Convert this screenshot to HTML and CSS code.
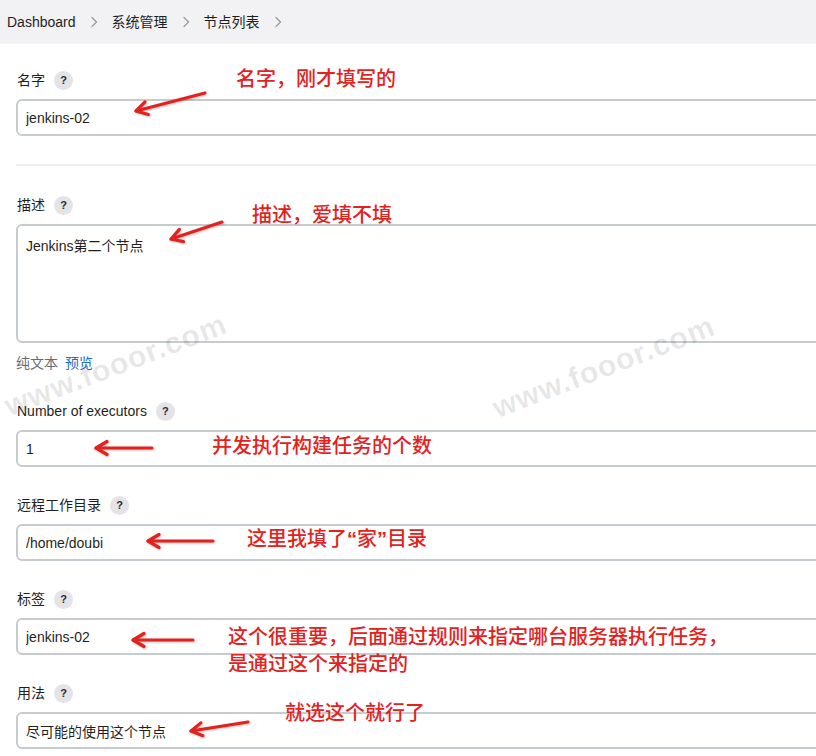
FILE: index.html
```html
<!DOCTYPE html>
<html lang="zh-CN">
<head>
  <meta charset="UTF-8">
  <title>节点列表 - Jenkins</title>
  <meta name="viewport" content="width=device-width, initial-scale=1.0">
  <link rel="stylesheet" href="styles.css">
</head>
<body>
  <nav class="crumbs">
    <a href="#">Dashboard</a>
    <svg class="chev" viewBox="0 0 8 12"><path d="M2 1.5 L6.5 6 L2 10.5"/></svg>
    <a href="#">系统管理</a>
    <svg class="chev" viewBox="0 0 8 12"><path d="M2 1.5 L6.5 6 L2 10.5"/></svg>
    <a href="#">节点列表</a>
    <svg class="chev" viewBox="0 0 8 12"><path d="M2 1.5 L6.5 6 L2 10.5"/></svg>
  </nav>

  <main class="form">
    <div class="field">
      <div class="label">名字 <span class="help">?</span></div>
      <input class="box" type="text" value="jenkins-02">
    </div>

    <hr class="sep">

    <div class="field">
      <div class="label">描述 <span class="help">?</span></div>
      <textarea class="box area">Jenkins第二个节点</textarea>
      <div class="preview"><span class="plain">纯文本</span> <a href="#">预览</a></div>
    </div>

    <div class="field">
      <div class="label">Number of executors <span class="help">?</span></div>
      <input class="box" type="text" value="1">
    </div>

    <div class="field">
      <div class="label">远程工作目录 <span class="help">?</span></div>
      <input class="box" type="text" value="/home/doubi">
    </div>

    <div class="field">
      <div class="label">标签 <span class="help">?</span></div>
      <input class="box" type="text" value="jenkins-02">
    </div>

    <div class="field">
      <div class="label">用法 <span class="help">?</span></div>
      <div class="box select">尽可能的使用这个节点</div>
    </div>
  </main>

  <!-- 截图上的批注和水印 -->
  <div class="overlay">
    <span class="mark mark-1">www.fooor.com</span>
    <span class="mark mark-2">www.fooor.com</span>

    <svg class="arrows" viewBox="0 0 816 756">
      <defs>
        <marker id="head" markerUnits="userSpaceOnUse" markerWidth="30" markerHeight="30"
                viewBox="-15 -15 30 30" refX="0" refY="0" orient="auto">
          <path d="M-11 -6.5 L0 0 L-11 6.5" fill="none" stroke="#e3211d" stroke-width="3.2"
                stroke-linecap="round" stroke-linejoin="round"/>
        </marker>
      </defs>
      <line x1="205" y1="93" x2="136" y2="111" marker-end="url(#head)"/>
      <line x1="222" y1="222" x2="171" y2="239" marker-end="url(#head)"/>
      <line x1="152" y1="448" x2="96" y2="448" marker-end="url(#head)"/>
      <line x1="213" y1="541" x2="148" y2="541" marker-end="url(#head)"/>
      <line x1="193" y1="640" x2="133" y2="640" marker-end="url(#head)"/>
      <line x1="248" y1="722" x2="191" y2="731" marker-end="url(#head)"/>
    </svg>

    <div class="note note-name">名字，刚才填写的</div>
    <div class="note note-desc">描述，爱填不填</div>
    <div class="note note-exec">并发执行构建任务的个数</div>
    <div class="note note-dir">这里我填了<span class="q">“</span>家<span class="q">”</span>目录</div>
    <div class="note note-label">这个很重要，后面通过规则来指定哪台服务器执行任务，<br>是通过这个来指定的</div>
    <div class="note note-usage">就选这个就行了</div>
  </div>
</body>
</html>
```

FILE: styles.css
```css
body {
  font-family: 'Liberation Sans', 'Noto Sans CJK SC', sans-serif;
  font-size: 14px;
  color: #1f1f22;
  margin: 0;
  padding: 0;
  background: #fff;
  width: 816px;
  height: 756px;
  overflow: hidden;
  position: relative;
}

.crumbs {
  height: 44px;
  background: #f2f2f5;
  display: flex;
  align-items: center;
  gap: 14px;
  padding-left: 7px;
}

.crumbs a {
  color: #1f1f22;
  text-decoration: none;
  line-height: 20px;
}

.chev {
  width: 8px;
  height: 12px;
}

.chev path {
  fill: none;
  stroke: #9a9aa0;
  stroke-width: 1.3;
  stroke-linecap: round;
  stroke-linejoin: round;
}

.form {
  padding: 26px 0 0 16px;
  width: 820px;
}

.field {
  margin-bottom: 28px;
}

.label {
  display: flex;
  align-items: center;
  gap: 9px;
  height: 20px;
  line-height: 20px;
  margin-bottom: 9px;
  padding-left: 1px;
}

.help {
  display: inline-flex;
  align-items: center;
  justify-content: center;
  width: 19px;
  height: 19px;
  border-radius: 50%;
  background: #e4e4e8;
  color: #2a2a2e;
  font-size: 11px;
  font-weight: bold;
}

.box {
  display: block;
  box-sizing: border-box;
  width: 100%;
  height: 37px;
  margin: 0;
  padding: 0 8px;
  border: 2px solid #c6cbcf;
  border-radius: 6px;
  background: #fff;
  font: inherit;
  color: #1f1f22;
  outline: none;
}

.area {
  height: 119px;
  padding-top: 10px;
  resize: none;
  line-height: 20px;
}

.select {
  display: flex;
  align-items: center;
}

.preview {
  margin-top: 10px;
  line-height: 20px;
}

.preview .plain {
  color: #6b6b72;
}

.preview a {
  color: #1b6fc2;
  text-decoration: none;
  margin-left: 3px;
}

.sep {
  border: none;
  height: 2px;
  background: #eeeef0;
  margin: 0 0 29px 0;
}

.overlay {
  position: absolute;
  top: 0;
  left: 0;
  width: 816px;
  height: 756px;
  pointer-events: none;
}

.arrows {
  position: absolute;
  top: 0;
  left: 0;
  width: 816px;
  height: 756px;
  filter: drop-shadow(1px 1px 1px rgba(0,0,0,0.25));
}

.arrows line {
  stroke: #e3211d;
  stroke-width: 3;
  stroke-linecap: round;
}

.note {
  position: absolute;
  font-family: 'Noto Sans CJK SC', sans-serif;
  font-size: 20px;
  font-weight: 500;
  line-height: 24px;
  color: #e3211d;
  white-space: nowrap;
}

.note .q {
  font-family: 'Liberation Sans', sans-serif;
  font-weight: bold;
}

.note-name { left: 236px; top: 66px; }
.note-desc { left: 252px; top: 202px; }
.note-exec { left: 212px; top: 433px; }
.note-dir { left: 247px; top: 526px; }
.note-label { left: 228px; top: 622px; line-height: 27px; }
.note-usage { left: 285px; top: 700px; }

.mark {
  position: absolute;
  font-family: 'Liberation Sans', sans-serif;
  font-size: 30px;
  font-weight: bold;
  color: rgba(0,0,0,0.1);
  letter-spacing: 1px;
  white-space: nowrap;
  transform: rotate(-21deg);
}

.mark-1 { left: -2px; top: 348px; }
.mark-2 { left: 486px; top: 350px; }
```
